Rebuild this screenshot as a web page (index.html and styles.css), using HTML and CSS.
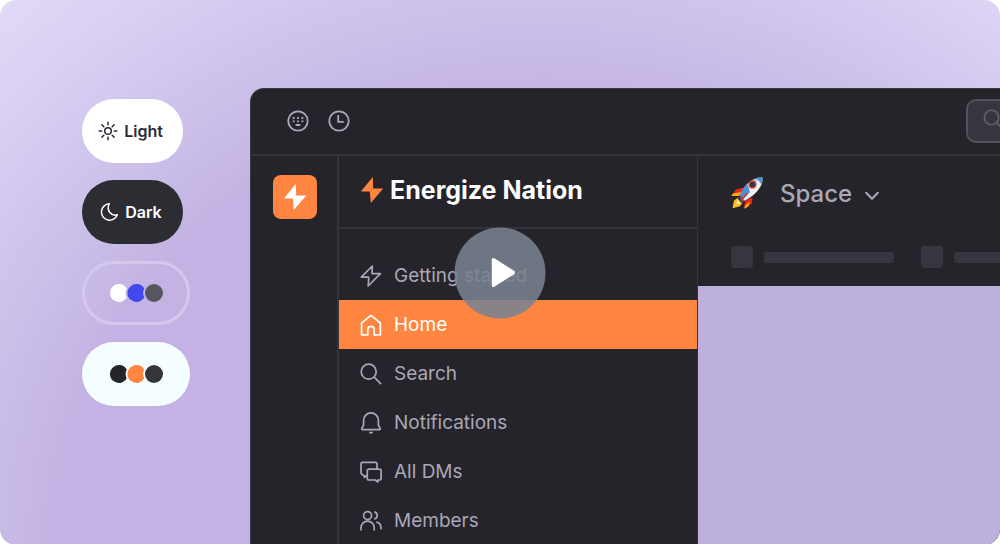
FILE: index.html
```
<!DOCTYPE html>
<html lang="en">
<head>
    <meta charset="UTF-8">
    <meta name="viewport" content="width=device-width, initial-scale=1.0">
    <title>Energize Nation</title>
    <link rel="stylesheet" href="styles.css">
</head>
<body>
    <main class="stage">
        <div class="themes">
            <button class="theme light" type="button">
                <svg width="20" height="20" viewBox="0 0 20 20" fill="none" stroke="currentColor" stroke-width="1.5" stroke-linecap="round">
                    <circle cx="10" cy="10" r="3.3"/>
                    <path d="M10 1.2v2.6M10 16.2v2.6M1.2 10h2.6M16.2 10h2.6M3.8 3.8l2 2M14.2 14.2l2 2M3.8 16.2l2-2M14.2 5.8l2-2"/>
                </svg>
                Light
            </button>
            <button class="theme dark" type="button">
                <svg width="20" height="20" viewBox="0 0 20 20" fill="none" stroke="currentColor" stroke-width="1.5" stroke-linejoin="round">
                    <path d="M10.2 1.8A8.2 8.2 0 1 0 18.3 12.8C12.5 14.7 7 8.6 10.2 1.8z"/>
                </svg>
                Dark
            </button>
            <button class="theme swatches outline" type="button" aria-label="Blue theme">
                <svg width="54" height="20" viewBox="0 0 54 20">
                    <path fill="#fff" d="M17.700 5.400A9 9 0 1 0 17.700 14.600A10.800 10.800 0 0 1 17.700 5.400z"/>
                    <path fill="#4048ee" d="M35.200 5.400A9 9 0 1 0 35.200 14.600A10.800 10.800 0 0 1 35.200 5.400z"/>
                    <circle fill="#56565f" cx="45" cy="10" r="9"/>
                </svg>
            </button>
            <button class="theme swatches mint" type="button" aria-label="Orange theme">
                <svg width="54" height="20" viewBox="0 0 54 20">
                    <path fill="#25242a" d="M17.700 5.400A9 9 0 1 0 17.700 14.600A10.800 10.800 0 0 1 17.700 5.400z"/>
                    <path fill="#ff8540" d="M35.200 5.400A9 9 0 1 0 35.200 14.600A10.800 10.800 0 0 1 35.200 5.400z"/>
                    <circle fill="#35343b" cx="45" cy="10" r="9"/>
                </svg>
            </button>
        </div>

        <div class="window">
            <header class="topbar">
                <button class="icon-btn" type="button" aria-label="Shortcuts">
                    <svg width="22" height="22" viewBox="0 0 22 22" fill="none" stroke="currentColor" stroke-width="1.8">
                        <circle cx="11" cy="11" r="9.7"/>
                        <path d="M5.7 8h1.8M10.1 8h1.8M14.5 8h1.8M5.7 11.4h1.8M10.1 11.4h1.8M14.5 11.4h1.8M8.6 15h4.8"/>
                    </svg>
                </button>
                <button class="icon-btn" type="button" aria-label="History">
                    <svg width="22" height="22" viewBox="0 0 22 22" fill="none" stroke="currentColor" stroke-width="1.8">
                        <circle cx="11" cy="11" r="9.7"/>
                        <path d="M10.2 5v6.8h5.6"/>
                    </svg>
                </button>
                <label class="search">
                    <svg width="20" height="20" viewBox="0 0 20 20" fill="none" stroke="currentColor" stroke-width="1.6">
                        <circle cx="8.5" cy="8.5" r="7.2"/>
                        <path d="M13.6 13.6L19 19"/>
                    </svg>
                    <input type="search" aria-label="Search">
                </label>
            </header>

            <div class="panes">
                <div class="rail">
                    <a class="workspace" href="#" aria-label="Energize Nation">
                        <svg width="24" height="28" viewBox="0 0 24 28" fill="#fff">
                            <path d="M12.8 1L.8 15.5h9L10.8 27 23.2 12.4h-10z"/>
                        </svg>
                    </a>
                </div>

                <aside class="sidebar">
                    <div class="brand">
                        <svg width="24" height="28" viewBox="0 0 24 28" fill="#ff8540">
                            <path d="M12.8 1L.8 15.5h9L10.8 27 23.2 12.4h-10z"/>
                        </svg>
                        <span>Energize Nation</span>
                    </div>
                    <nav>
                        <a href="#">
                            <svg viewBox="0 0 22 22"><path d="M12.3 1L1.3 12.2h7.4L8.2 21 20.4 8.6H12z"/></svg>
                            Getting started
                        </a>
                        <a href="#" class="active">
                            <svg viewBox="0 0 22 22"><path d="M1.6 9L11 1.3 20.4 9v11.9h-6.2v-5.3a3.2 3.2 0 0 0-6.4 0v5.3H1.6z"/></svg>
                            Home
                        </a>
                        <a href="#">
                            <svg viewBox="0 0 22 22"><circle cx="8.7" cy="8.7" r="7.5"/><path d="M14.2 14.2l6.9 6.9"/></svg>
                            Search
                        </a>
                        <a href="#">
                            <svg viewBox="0 0 22 22"><path d="M3.6 13V8.3a7.4 7.4 0 0 1 14.8 0V13l1.8 3.6q.4 1-.7 1h-17q-1.100 0-.7-1zM9.200 20.700h3.600"/></svg>
                            Notifications
                        </a>
                        <a href="#">
                            <svg viewBox="0 0 22 22"><path d="M7.5 15H6l-1.700 1.400V15L2.200 13.500Q1 13 1 11.800V3q0-1.700 1.700-1.700h12.600Q17 1.300 17 3v5.200M9 8.200h10.400q1.700 0 1.700 1.700v7.400q0 1.700-1.700 1.700h-1.600v2l-2.600-2H9q-1.700 0-1.700-1.700V9.900Q7.300 8.200 9 8.200z"/></svg>
                            All DMs
                        </a>
                        <a href="#">
                            <svg viewBox="0 0 22 22"><circle cx="7.600" cy="5.600" r="4"/><path d="M1 20.500v-2.800a6.600 6.600 0 0 1 13.200 0v2.800M14.300 1.900a3.700 3.700 0 0 1 0 7.200M16.300 12.100q4.700.8 4.700 5.600v1.500"/></svg>
                            Members
                        </a>
                    </nav>
                </aside>

                <section class="content">
                    <div class="content-head">
                        <button class="space" type="button">
                            <svg width="32" height="32" viewBox="0 0 32 32">
                                <path fill="#e8250e" d="M12.500 10.500L5 12.500.5 19l9-.4zM21.500 20.500l-.5 6-7.500 5.200.3-9z"/>
                                <path fill="#ffa514" d="M.5 19l1.300-2.500 8.400-1.500-2 4zM13.500 31.700l.2-3 5.500-4.500-1.700 5z"/>
                                <path fill="#ffc01e" d="M8 20L3 23.500 1.500 31.300l7.500-2L13 24z"/>
                                <path fill="#ffe2b5" d="M8.500 20L6 24l-.5 3.500 4-1L12.500 23z"/>
                                <path fill="#3c3943" d="M8 19.500l5 5-2.500 2L6.700 21.800z"/>
                                <path fill="#bcc8d8" d="M9 18.500Q12.500 8 22 2.500q5-2.500 9.500-2 .8 5-2.500 10Q23.500 19 13.500 23.500z"/>
                                <path fill="#f0f1f5" d="M11 20.500Q18 11 27 3l3 5Q25 18 13.500 23.500z"/>
                                <path fill="#4c90d3" d="M9 18.500Q11 12 16 7l3 8-6.500 7zM24 1.500q4-1.600 7.500-1 .7 3.600-1 7Q29 3 24 1.500z"/>
                                <circle cx="21.500" cy="7.500" r="3.400" fill="#32384a" stroke="#da4529" stroke-width="1.500"/>
                                <path stroke="#da3720" stroke-width="1.500" d="M10 24.500q2-5 6-8"/>
                            </svg>
                            <span>Space</span>
                            <svg class="chevron" width="14" height="10" viewBox="0 0 14 10" fill="none" stroke="currentColor" stroke-width="2" stroke-linecap="round" stroke-linejoin="round"><path d="M1.200 1.800L7 7.800l5.800-6"/></svg>
                        </button>
                        <div class="tabs">
                            <span class="box"></span><span class="line"></span>
                            <span class="box"></span><span class="line"></span>
                        </div>
                    </div>
                    <div class="canvas"></div>
                </section>
            </div>
        </div>

        <button class="play" type="button" aria-label="Play">
            <svg width="24" height="30" viewBox="0 0 24 30" fill="#fff">
                <path d="M0 2.800Q0-.8 3.200 1L22.500 13.300q2.400 1.700 0 3.400L3.200 29Q0 30.800 0 27.200z"/>
            </svg>
        </button>
    </main>
</body>
</html>
```

FILE: styles.css
```
* {
    box-sizing: border-box;
}
body {
    margin: 0;
    background: #fff;
    font-family: Inter, "Liberation Sans", sans-serif;
}
button {
    font: inherit;
    border: none;
    padding: 0;
    background: none;
    color: inherit;
    cursor: pointer;
}
a {
    color: inherit;
    text-decoration: none;
}
svg {
    display: block;
    flex: none;
}
.stage {
    position: relative;
    display: flex;
    min-height: 100vh;
    padding: 88px 0 0 82px;
    overflow: hidden;
    border-radius: 16px;
    background: radial-gradient(ellipse 80% 134% at 54% 100%, #c3b2e3 0%, #c3b2e3 60%, #c8bae7 67%, #cfc3ec 76%, #dad1f3 90%, #e1d9f6 100%);
}

/* Theme pills */
.themes {
    display: flex;
    flex-direction: column;
    align-items: flex-start;
    gap: 17px;
    flex: none;
    width: 168px;
    padding-top: 11px;
}
.theme {
    display: flex;
    align-items: center;
    justify-content: center;
    gap: 6px;
    height: 64px;
    width: 101px;
    padding-right: 4px;
    border-radius: 32px;
    font-size: 16px;
    font-weight: 600;
}
.light {
    background: #fff;
    color: #2c2a38;
}
.dark {
    background: #2c2d32;
    color: #fff;
}
.swatches {
    width: 108px;
    padding-right: 0;
}
.outline {
    border: 3px solid #d5c8ed;
}
.mint {
    background: #f5feff;
}

/* App window */
.window {
    display: flex;
    flex-direction: column;
    flex: 1;
    min-width: 0;
    overflow: hidden;
    border: 1px solid #3a3940;
    border-width: 1px 0 0 1px;
    border-radius: 14px 0 0 0;
    background: #25242a;
    color: #aaa7b7;
}
.topbar {
    display: flex;
    align-items: center;
    gap: 19px;
    height: 67px;
    padding: 0 0 2px 36px;
    border-bottom: 2px solid #35343a;
}
.search {
    display: flex;
    align-items: center;
    gap: 10px;
    flex: none;
    width: 300px;
    height: 44px;
    margin-left: auto;
    margin-right: -266px;
    padding: 0 0 3px 15px;
    border: 2px solid #53525b;
    border-radius: 10px;
    background: #37363e;
    color: #62606c;
}
.search input {
    width: 100%;
    border: none;
    outline: none;
    background: none;
    color: inherit;
    font: inherit;
}
.panes {
    display: flex;
    flex: 1;
}
.rail {
    flex: none;
    width: 88px;
    padding: 19px 0 0 22px;
    border-right: 2px solid #35343a;
}
.workspace {
    display: flex;
    align-items: center;
    justify-content: center;
    width: 44px;
    height: 44px;
    border-radius: 8px;
    background: #ff8540;
}
.sidebar {
    flex: none;
    width: 359px;
    border-right: 1px solid #35343a;
}
.brand {
    display: flex;
    align-items: center;
    gap: 6px;
    height: 73px;
    padding: 0 0 3px 21px;
    border-bottom: 2px solid #35343a;
    color: #fff;
    font-size: 25px;
    font-weight: 700;
}
nav {
    padding-top: 22px;
}
nav a {
    display: flex;
    align-items: center;
    gap: 12px;
    height: 49px;
    padding-left: 21px;
    font-size: 19px;
}
nav svg {
    width: 22px;
    height: 22px;
    fill: none;
    stroke: currentColor;
    stroke-width: 1.7;
    stroke-linejoin: round;
}
nav .active {
    background: #ff8540;
    color: #fff;
}

/* Space page */
.content {
    display: flex;
    flex-direction: column;
    flex: 1;
    min-width: 0;
    overflow: hidden;
}
.content-head {
    height: 130px;
    padding: 18px 0 0 33px;
}
.space {
    display: flex;
    align-items: center;
    height: 38px;
    font-size: 24px;
    font-weight: 500;
}
.space span {
    margin: 0 13px 0 17px;
}
.chevron {
    margin-top: 5px;
}
.tabs {
    display: flex;
    align-items: center;
    margin-top: 34px;
}
.box,
.line {
    flex: none;
    background: #37363e;
}
.box {
    width: 22px;
    height: 22px;
    margin-right: 11px;
    border-radius: 4px;
}
.line {
    width: 130px;
    height: 11px;
    margin-right: 27px;
    border-radius: 3px;
}
.canvas {
    flex: 1;
    background: #bdb0de;
}

/* Play button over the preview */
.play {
    position: absolute;
    top: 50%;
    left: 50%;
    display: flex;
    align-items: center;
    justify-content: center;
    width: 91px;
    height: 91px;
    padding-left: 6px;
    transform: translate(-50%, -50%);
    border-radius: 50%;
    background: rgba(121, 130, 145, 0.88);
}
```
